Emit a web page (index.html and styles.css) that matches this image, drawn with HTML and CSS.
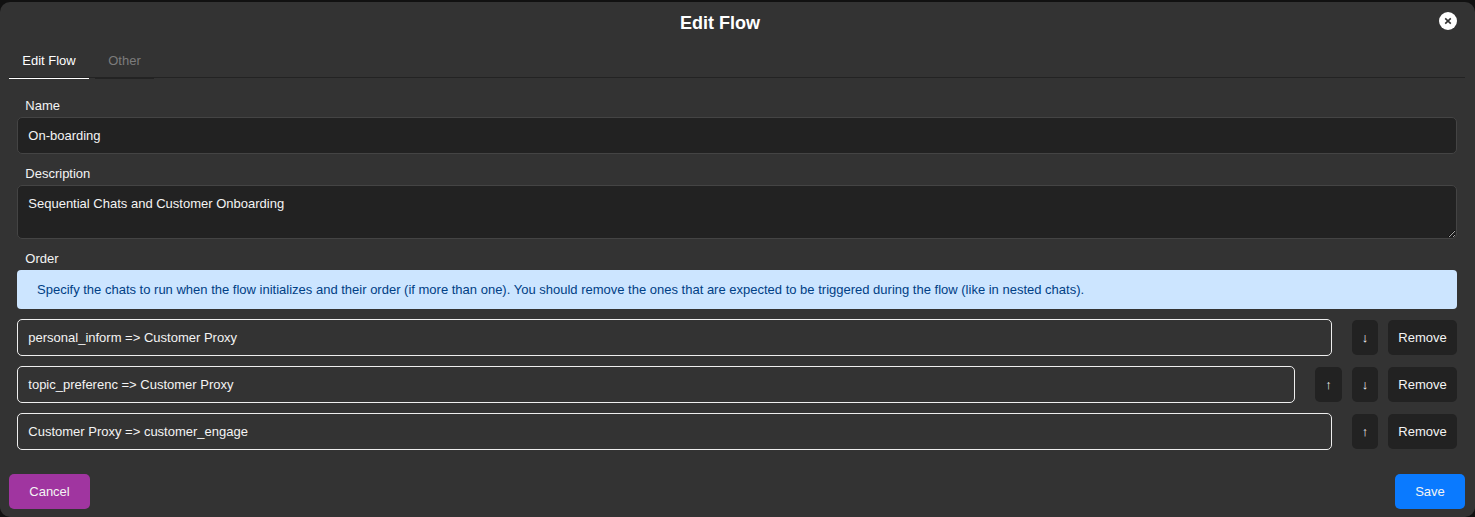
FILE: index.html
```html
<!DOCTYPE html>
<html lang="en">
<head>
<meta charset="utf-8">
<title>Edit Flow</title>
<link rel="stylesheet" href="styles.css">
</head>
<body>
<main class="modal">
  <header class="modal-header">
    <h1 class="modal-title">Edit Flow</h1>
    <button class="close" type="button" aria-label="Close">
      <svg width="18" height="18" viewBox="0 0 18 18"><circle cx="9" cy="9" r="9" fill="#fff"/><path d="M6.2 6.4l5.6 5.2M11.8 6.4l-5.6 5.2" stroke="#333" stroke-width="1.6"/></svg>
    </button>
  </header>
  <nav class="tabs">
    <button class="tab tab-active" type="button">Edit Flow</button>
    <button class="tab" type="button">Other</button>
  </nav>
  <section class="panel">
    <label class="label" for="name">Name</label>
    <input class="field" id="name" value="On-boarding">
    <label class="label label-next" for="description">Description</label>
    <textarea class="field area" id="description">Sequential Chats and Customer Onboarding</textarea>
    <div class="label label-next">Order</div>
    <div class="alert">Specify the chats to run when the flow initializes and their order (if more than one). You should remove the ones that are expected to be triggered during the flow (like in nested chats).</div>
    <div class="rows">
      <div class="row">
        <div class="chat">personal_inform =&gt; Customer Proxy</div>
        <div class="actions"><button class="btn arrow" type="button">↓</button><button class="btn remove" type="button">Remove</button></div>
      </div>
      <div class="row">
        <div class="chat">topic_preferenc =&gt; Customer Proxy</div>
        <div class="actions"><button class="btn arrow arrow-first" type="button">↑</button><button class="btn arrow" type="button">↓</button><button class="btn remove" type="button">Remove</button></div>
      </div>
      <div class="row">
        <div class="chat">Customer Proxy =&gt; customer_engage</div>
        <div class="actions"><button class="btn arrow" type="button">↑</button><button class="btn remove" type="button">Remove</button></div>
      </div>
    </div>
  </section>
  <footer class="modal-footer">
    <button class="btn cancel" type="button">Cancel</button>
    <button class="btn save" type="button">Save</button>
  </footer>
</main>
</body>
</html>
```

FILE: styles.css
```css
* {
  box-sizing: border-box;
}

body {
  margin: 0;
  padding-top: 2px;
  height: 517px;
  overflow: hidden;
  background: #111;
  color: #f4f4f4;
  font: 13px/15px "Liberation Sans", Arial, sans-serif;
}

button, input, textarea {
  font: inherit;
  color: inherit;
  margin: 0;
}

.modal {
  height: 515px;
  padding: 0 10px 8px 9px;
  background: #333;
  border-radius: 10px;
  display: flex;
  flex-direction: column;
}

.modal-header {
  height: 41px;
  padding: 10px 8px 0 0;
  display: flex;
  align-items: flex-start;
}

.modal-title {
  flex: 1;
  margin: 0;
  padding: 1px 8px 0 0;
  color: #fff;
  font-size: 18px;
  line-height: 21px;
  text-align: center;
}

.close {
  padding: 0;
  border: 0;
  background: none;
  height: 18px;
}

.close svg {
  display: block;
}

.tabs {
  height: 35px;
  display: flex;
  align-items: flex-start;
  gap: 6px;
  border-bottom: 1px solid #232323;
}

.tab {
  flex: none;
  width: 59px;
  height: 36px;
  padding: 0;
  border: 0;
  border-bottom: 1px solid #232323;
  background: none;
  color: #7c7c7c;
}

.tab-active {
  width: 80px;
  color: #fff;
  border-color: #fff;
}

.panel {
  padding: 20px 8px 0;
  display: flex;
  flex-direction: column;
}

.label {
  padding-left: 8.3px;
  margin-bottom: 4px;
}

.label-next {
  margin-top: 12px;
}

.field {
  display: block;
  width: 100%;
  height: 37px;
  padding: 10px 10.3px;
  border: 1px solid #444;
  border-radius: 5px;
  background: #222;
  outline: 0;
}

.area {
  height: 54px;
}

.alert {
  height: 39px;
  padding: 12px 20px;
  border-radius: 4px;
  background: #cce5ff;
  color: #004085;
  white-space: nowrap;
}

.rows {
  margin-top: 10px;
  display: flex;
  flex-direction: column;
  gap: 10px;
}

.row {
  display: flex;
  align-items: center;
  gap: 20px;
}

.chat {
  flex: 1;
  height: 37px;
  padding: 10px 10.3px;
  border: 1px solid #eee;
  border-radius: 5px;
}

.actions {
  display: flex;
  gap: 10px;
}

.btn {
  height: 35px;
  padding: 0;
  border: 0;
  border-radius: 5px;
  background: #222;
}

.arrow {
  width: 26px;
}

.arrow-first {
  width: 27px;
}

.remove {
  width: 69px;
}

.modal-footer {
  margin-top: auto;
  display: flex;
  justify-content: space-between;
}

.cancel {
  width: 81px;
  background: #a035a0;
}

.save {
  width: 70px;
  background: #0a7aff;
}
```
